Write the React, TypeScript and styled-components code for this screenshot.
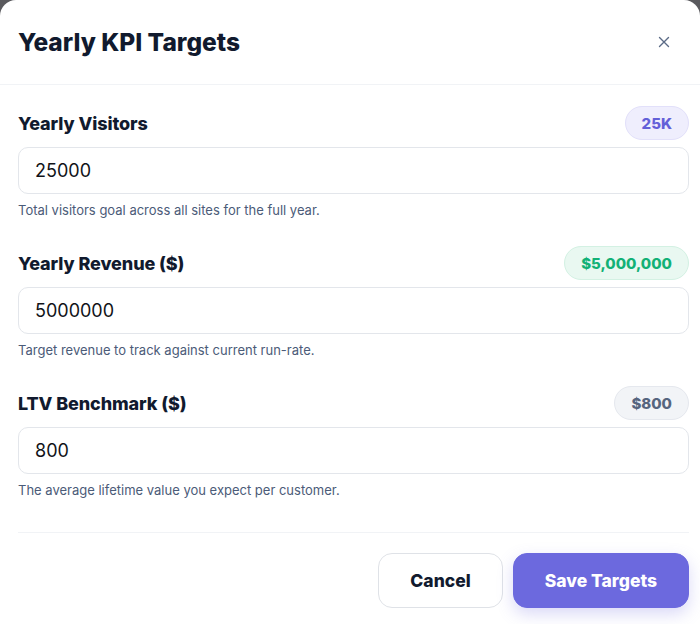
import React, { useState } from 'react';
import styled, { createGlobalStyle } from 'styled-components';

const GlobalStyle = createGlobalStyle`
  html, body {
    margin: 0;
    padding: 0;
    background-color: #5a5a5e;
    font-family: Inter, "Noto Sans", "Liberation Sans", sans-serif;
    -webkit-font-smoothing: antialiased;
  }
`;

const ModalContent = styled.div`
  display: flex;
  flex-direction: column;
  width: 700px;
  min-height: 624px;
  background-color: #ffffff;
  border-radius: 16px 16px 0 0;
  box-sizing: border-box;
`;

const Header = styled.div`
  display: flex;
  align-items: center;
  justify-content: space-between;
  height: 85px;
  padding: 0 24px 0 18px;
  border-bottom: 1px solid #f1f3f6;
  box-sizing: border-box;
`;

const Title = styled.h2`
  margin: 0;
  font-size: 24.5px;
  font-weight: 800;
  color: #111a2e;
`;

const CloseButton = styled.button`
  display: flex;
  align-items: center;
  justify-content: center;
  width: 24px;
  height: 24px;
  padding: 0;
  border: none;
  background: transparent;
  color: #5b6b86;
  cursor: pointer;
`;

const Fields = styled.div`
  display: flex;
  flex-direction: column;
  gap: 27px;
  padding: 21px 11px 0 18px;
`;

const Field = styled.div`
  display: flex;
  flex-direction: column;
`;

const LabelRow = styled.div`
  display: flex;
  align-items: center;
  justify-content: space-between;
  height: 34px;
`;

const Label = styled.label`
  font-size: 18px;
  font-weight: 800;
  letter-spacing: -0.1px;
  color: #111a2e;
`;

type Tone = 'purple' | 'green' | 'gray';

const tones: Record<Tone, { bg: string; border: string; color: string }> = {
  purple: { bg: '#efeefd', border: '#e2e0fa', color: '#6360d8' },
  green: { bg: '#e9f8f1', border: '#d3f1e3', color: '#12b176' },
  gray: { bg: '#f2f4f7', border: '#e5e8ee', color: '#56657e' },
};

const Badge = styled.span<{ $tone: Tone }>`
  display: inline-flex;
  align-items: center;
  height: 34px;
  padding: 0 16px;
  border-radius: 17px;
  box-sizing: border-box;
  font-size: 15px;
  font-weight: 800;
  background-color: ${(p) => tones[p.$tone].bg};
  border: 1px solid ${(p) => tones[p.$tone].border};
  color: ${(p) => tones[p.$tone].color};
`;

const Input = styled.input`
  margin-top: 7px;
  height: 47px;
  width: 100%;
  padding: 0 16px;
  box-sizing: border-box;
  border: 1px solid #e3e6eb;
  border-radius: 10px;
  font-family: inherit;
  font-size: 18px;
  color: #111318;
  background-color: #ffffff;
  outline: none;
`;

const Help = styled.div`
  margin-top: 7px;
  font-size: 13px;
  line-height: 18px;
  color: #4b5b78;
`;

const Footer = styled.div`
  display: flex;
  justify-content: flex-end;
  gap: 10px;
  margin: 33px 11px 0 18px;
  padding-top: 20px;
  border-top: 1px solid #f1f3f6;
`;

const Button = styled.button<{ $primary?: boolean }>`
  height: 55px;
  padding: 0 31px;
  border-radius: 14px;
  font-family: inherit;
  font-size: 17.5px;
  font-weight: 800;
  cursor: pointer;
  border: 1px solid ${(p) => (p.$primary ? '#6c69de' : '#dfe2e7')};
  background-color: ${(p) => (p.$primary ? '#6c69de' : '#ffffff')};
  color: ${(p) => (p.$primary ? '#ffffff' : '#111a2e')};
  box-shadow: ${(p) => (p.$primary ? '0 6px 16px rgba(108, 105, 222, 0.25)' : 'none')};
`;

const fields = [
  { key: 'visitors', label: 'Yearly Visitors', value: '25000', badge: '25K', tone: 'purple' as Tone, help: 'Total visitors goal across all sites for the full year.' },
  { key: 'revenue', label: 'Yearly Revenue ($)', value: '5000000', badge: '$5,000,000', tone: 'green' as Tone, help: 'Target revenue to track against current run-rate.' },
  { key: 'ltv', label: 'LTV Benchmark ($)', value: '800', badge: '$800', tone: 'gray' as Tone, help: 'The average lifetime value you expect per customer.' },
];

const App: React.FC = () => {
  const [values, setValues] = useState<Record<string, string>>(
    Object.fromEntries(fields.map((f) => [f.key, f.value]))
  );

  return (
    <>
      <GlobalStyle />
      <ModalContent>
        <Header>
          <Title>Yearly KPI Targets</Title>
          <CloseButton aria-label="Close">
            <svg width="12" height="12" viewBox="0 0 12 12" fill="none" stroke="currentColor" strokeWidth="1.4" strokeLinecap="round">
              <path d="M1.5 1.5l9 9M10.5 1.5l-9 9" />
            </svg>
          </CloseButton>
        </Header>
        <Fields>
          {fields.map((f) => (
            <Field key={f.key}>
              <LabelRow>
                <Label>{f.label}</Label>
                <Badge $tone={f.tone}>{f.badge}</Badge>
              </LabelRow>
              <Input
                value={values[f.key]}
                onChange={(e) => setValues({ ...values, [f.key]: e.target.value })}
              />
              <Help>{f.help}</Help>
            </Field>
          ))}
        </Fields>
        <Footer>
          <Button>Cancel</Button>
          <Button $primary>Save Targets</Button>
        </Footer>
      </ModalContent>
    </>
  );
};

export default App;
